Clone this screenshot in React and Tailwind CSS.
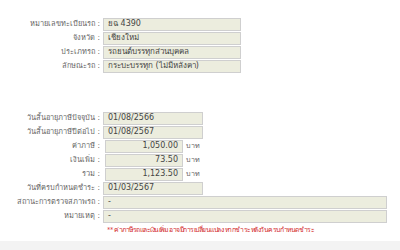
import React from "react";

const font = { fontFamily: '"DejaVu Sans", "Noto Sans", sans-serif' };

function Row({ label, children }) {
  return (
    <div className="flex h-[14px] items-center">
      <div className="w-[103px] shrink-0 pr-[3px] text-right text-[7.4px] leading-none text-[#666]">
        {label} :
      </div>
      {children}
    </div>
  );
}

function Box({ w, children, right }) {
  return (
    <div
      className={`flex h-[13px] items-center border border-[#cfcfcf] bg-[#ecedde] px-[4px] text-[8px] leading-none text-[#444] ${right ? "justify-end" : ""}`}
      style={{ width: w }}
    >
      {children}
    </div>
  );
}

function Money({ value }) {
  return (
    <div className="ml-[2px] flex items-center gap-[3px]">
      <Box w={78} right>{value}</Box>
      <span className="text-[7.2px] text-[#666]">บาท</span>
    </div>
  );
}

export default function App() {
  return (
    <div className="h-[250px] w-[400px] overflow-hidden bg-white" style={font}>
      <div className="pt-[17px]">
        <Row label="หมายเลขทะเบียนรถ"><Box w={138}>ยฉ 4390</Box></Row>
        <Row label="จังหวัด"><Box w={138}>เชียงใหม่</Box></Row>
        <Row label="ประเภทรถ"><Box w={138}>รถยนต์บรรทุกส่วนบุคคล</Box></Row>
        <Row label="ลักษณะรถ"><Box w={138}>กระบะบรรทุก (ไม่มีหลังคา)</Box></Row>
      </div>
      <div className="pt-[38px]">
        <Row label="วันสิ้นอายุภาษีปัจจุบัน"><Box w={100}>01/08/2566</Box></Row>
        <Row label="วันสิ้นอายุภาษีปีต่อไป"><Box w={100}>01/08/2567</Box></Row>
        <Row label="ค่าภาษี"><Money value="1,050.00" /></Row>
        <Row label="เงินเพิ่ม"><Money value="73.50" /></Row>
        <Row label="รวม"><Money value="1,123.50" /></Row>
        <Row label="วันที่ครบกำหนดชำระ"><Box w={100}>01/03/2567</Box></Row>
        <Row label="สถานะการตรวจสภาพรถ"><Box w={284}>-</Box></Row>
        <Row label="หมายเหตุ"><Box w={284}>-</Box></Row>
        <div className="flex h-[14px] items-center pl-[107px] text-[6.8px] leading-none tracking-[-0.5px] text-[#d21f1f]">
          ** ค่าภาษีรถและเงินเพิ่ม อาจมีการเปลี่ยนแปลง หากชำระหลังวันครบกำหนดชำระ
        </div>
      </div>
      <div className="mt-[4px] h-[20px] bg-[#f3f3f3]" />
    </div>
  );
}
